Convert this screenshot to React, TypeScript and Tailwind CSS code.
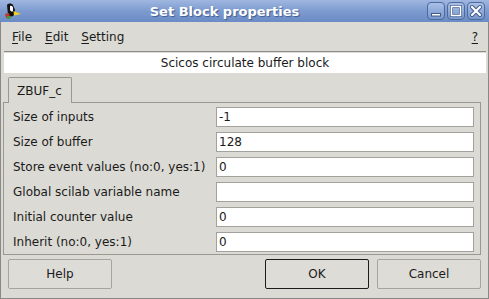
import React from "react";

const font = { fontFamily: '"DejaVu Sans", "Liberation Sans", sans-serif' };

function WinBtn({ kind }: { kind: "min" | "max" | "close" }) {
  return (
    <div className="w-[18px] h-[18px] rounded-[4px] border border-[#4d6a9e] bg-gradient-to-b from-[#a9c0e6] to-[#7996cb] flex items-center justify-center">
      <svg width="14" height="14" viewBox="0 0 14 14">
        {kind === "min" && (
          <rect x="2.5" y="9.5" width="9" height="2.5" fill="#fff" stroke="#3d5a8c" strokeWidth="1" />
        )}
        {kind === "max" && (
          <g>
            <rect x="2.5" y="2.5" width="9" height="9" fill="none" stroke="#3d5a8c" strokeWidth="3" />
            <rect x="2.5" y="2.5" width="9" height="9" fill="none" stroke="#fff" strokeWidth="1.6" />
          </g>
        )}
        {kind === "close" && (
          <g strokeLinecap="round">
            <path d="M3 3 L11 11 M11 3 L3 11" stroke="#3d5a8c" strokeWidth="4" />
            <path d="M3 3 L11 11 M11 3 L3 11" stroke="#fff" strokeWidth="2.2" />
          </g>
        )}
      </svg>
    </div>
  );
}

function Row({ label, value }: { label: string; value: string }) {
  return (
    <div className="grid grid-cols-[203px_1fr] h-[20px] items-center">
      <div className="text-[12px] text-[#1a1a1a] leading-none whitespace-nowrap">{label}</div>
      <div className="h-[20px] bg-white border border-[#a3a19c] flex items-center pl-[2px] text-[12px] text-[#1a1a1a] leading-none">
        {value}
      </div>
    </div>
  );
}

export default function App() {
  const rows: [string, string][] = [
    ["Size of inputs", "-1"],
    ["Size of buffer", "128"],
    ["Store event values (no:0, yes:1)", "0"],
    ["Global scilab variable name", ""],
    ["Initial counter value", "0"],
    ["Inherit (no:0, yes:1)", "0"],
  ];
  return (
    <div className="w-[489px] h-[299px] bg-[#dcdad5] flex flex-col overflow-hidden" style={font}>
      {/* Title bar */}
      <div className="h-[22px] flex items-center bg-gradient-to-b from-[#9fb7e0] via-[#7e9bd0] to-[#6b8bc5] shrink-0">
        <div className="w-[22px] h-[22px] flex items-center justify-center">
          <svg width="20" height="20" viewBox="0 0 20 20">
            <path d="M6 4 C7 2 11 2 12 4 L14 9 L13 14 C11 16 8 16 7 14 Z" fill="#111" />
            <path d="M9 5 C10.5 4.5 12 5.5 12 7 L12 10 C11 11 9.5 10.5 9 9 Z" fill="#fff" />
            <path d="M12.5 10 L20 13 L13 14.5 Z" fill="#f2d21a" />
            <path d="M4 13 L8 12 L9 16 L5 17 Z" fill="#c9302c" />
            <path d="M6 15 L10 15 L9 18 L6 18 Z" fill="#3f9b3a" />
          </svg>
        </div>
        <div
          className="flex-1 text-center text-white font-bold text-[13px] leading-none [text-shadow:1px_1px_1px_#3e5d93]"
        >
          Set Block properties
        </div>
        <div className="flex gap-[2px] pr-[4px]">
          <WinBtn kind="min" />
          <WinBtn kind="max" />
          <WinBtn kind="close" />
        </div>
      </div>

      {/* Body */}
      <div className="flex-1 flex flex-col border-x border-b border-[#8a8884] pl-[2px] pr-[2px]">
        {/* Menu bar */}
        <div className="h-[30px] ml-[1px] flex items-center border-b border-[#8f8d89] text-[12px] text-[#1a1a1a] shrink-0">
          <span className="ml-[8px]"><span className="underline underline-offset-2">F</span>ile</span>
          <span className="ml-[13px]"><span className="underline underline-offset-2">E</span>dit</span>
          <span className="ml-[13px]"><span className="underline underline-offset-2">S</span>etting</span>
          <span className="ml-auto mr-[8px] underline underline-offset-2">?</span>
        </div>
        {/* Description */}
        <div className="h-[20px] mt-[1px] ml-[1px] bg-white flex items-center justify-center text-[12px] text-[#1a1a1a] shrink-0">
          Scicos circulate buffer block
        </div>

        <div className="pr-[5px] flex flex-col">
          {/* Tab */}
          <div className="mt-[4px] flex">
            <div className="ml-[5px] w-[64px] h-[26px] -mb-px relative z-10 border border-b-0 border-[#9a9893] rounded-t-[2px] bg-[#dcdad5] flex items-center pl-[8px] text-[12px] text-[#1a1a1a]">
              ZBUF_c
            </div>
          </div>
          {/* Panel */}
          <div className="border border-[#9a9893] pt-[4px] pb-[2px] pl-[9px] pr-[6px] flex flex-col gap-[5px]">
            {rows.map(([l, v]) => (
              <Row key={l} label={l} value={v} />
            ))}
          </div>
          {/* Buttons */}
          <div className="mt-[4px] flex items-center">
            <button className="ml-[5px] w-[104px] h-[30px] border border-[#a6a49f] rounded-[2px] bg-[#dedcd7] text-[12px] text-[#1a1a1a]">
              Help
            </button>
            <button className="ml-auto w-[104px] h-[30px] border border-[#1c1c1c] rounded-[2px] bg-[#dedcd7] text-[12px] text-[#1a1a1a]">
              OK
            </button>
            <button className="ml-[8px] w-[104px] h-[30px] border border-[#a6a49f] rounded-[2px] bg-[#dedcd7] text-[12px] text-[#1a1a1a]">
              Cancel
            </button>
          </div>
        </div>
      </div>
    </div>
  );
}
